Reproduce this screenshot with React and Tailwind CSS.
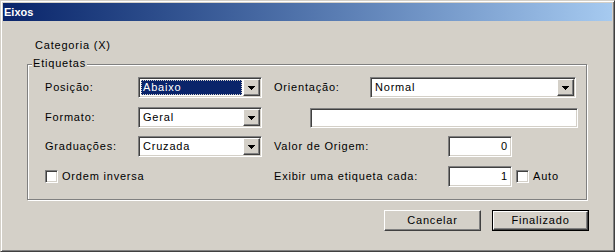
import React from 'react'

const sunken = "border border-t-[#808080] border-l-[#808080] border-b-white border-r-white shadow-[inset_1px_1px_0_#404040,inset_-1px_-1px_0_#d4d0c8]"
const raised = "border border-t-white border-l-white border-b-[#404040] border-r-[#404040] shadow-[inset_-1px_-1px_0_#808080]"

function Arrow() {
  return (
    <svg width="7" height="4" viewBox="0 0 7 4" className="block">
      <path d="M0 0h7L3.5 4z" fill="#000" shapeRendering="crispEdges" />
    </svg>
  )
}

function Combo({ value, width, selected }) {
  return (
    <div className={`flex h-[21px] p-[1px] ${sunken} ${width}`}>
      <div className="flex-1 bg-white p-[1px] flex">
        {selected ? (
          <div className="flex-1 bg-[#0a246a] text-white border border-dotted border-[#d4d0c8] flex items-center pl-[1px] leading-[13px]">
            {value}
          </div>
        ) : (
          <div className="flex-1 flex items-center pl-[2px] leading-[13px]">{value}</div>
        )}
      </div>
      <div className={`w-[17px] bg-[#d4d0c8] flex items-center justify-center ${raised}`}>
        <Arrow />
      </div>
    </div>
  )
}

function Field({ value, width, height = 'h-[21px]' }) {
  return (
    <div className={`${sunken} ${width} ${height} bg-white flex items-center justify-end pr-[3px] leading-[13px]`}>
      {value}
    </div>
  )
}

function Check() {
  return <div className={`w-[13px] h-[13px] bg-white shrink-0 ${sunken}`} />
}

export default function App() {
  return (
    <div className="w-[615px] h-[252px] bg-[#d4d0c8] border border-t-[#d4d0c8] border-l-[#d4d0c8] border-r-[#404040] border-b-[#404040] shadow-[inset_1px_1px_0_#fff,inset_-1px_-1px_0_#808080] p-[2px] flex flex-col text-[11px] tracking-[0.8px] text-black font-[family-name:'Liberation_Sans',Arial,sans-serif]">
      {/* title bar */}
      <div className="h-[18px] shrink-0 bg-linear-to-r from-[#0a246a] to-[#a6caf0] flex items-center">
        <span className="font-bold text-white pl-[1px] tracking-normal leading-[18px]">Eixos</span>
      </div>

      <div className="mt-[18px] ml-[32px] leading-[13px]">Categoria (X)</div>

      {/* Etiquetas group */}
      <div className="mt-[12px] ml-[24px] w-[560px] h-[136px] relative border border-[#808080] shadow-[inset_1px_1px_0_#fff,1px_1px_0_#fff] pt-[12px] pl-[17px]">
        <div className="absolute left-[4px] top-[-8px] px-[1px] bg-[#d4d0c8] leading-[13px]">Etiquetas</div>

        <div className="flex items-center h-[21px]">
          <div className="w-[93px]">Posição:</div>
          <Combo value="Abaixo" width="w-[124px]" selected />
          <div className="ml-[12px] w-[96px]">Orientação:</div>
          <Combo value="Normal" width="w-[206px]" />
        </div>

        <div className="flex items-center h-[21px] mt-[9px]">
          <div className="w-[93px]">Formato:</div>
          <Combo value="Geral" width="w-[124px]" />
          <div className="ml-[48px]">
            <Field value="" width="w-[268px]" height="h-[20px]" />
          </div>
        </div>

        <div className="flex items-center h-[21px] mt-[8px]">
          <div className="w-[93px]">Graduações:</div>
          <Combo value="Cruzada" width="w-[124px]" />
          <div className="ml-[12px] w-[174px]">Valor de Origem:</div>
          <Field value="0" width="w-[64px]" />
        </div>

        <div className="flex items-center h-[21px] mt-[9px]">
          <div className="w-[229px] flex items-center gap-[4px]">
            <Check />
            <span>Ordem inversa</span>
          </div>
          <div className="w-[174px]">Exibir uma etiqueta cada:</div>
          <Field value="1" width="w-[64px]" />
          <div className="ml-[4px]"><Check /></div>
          <span className="ml-[4px]">Auto</span>
        </div>
      </div>

      {/* buttons */}
      <div className="flex mt-[10px] ml-[381px] gap-[11px]">
        <button className={`w-[97px] h-[21px] bg-[#d4d0c8] ${raised} leading-[13px]`}>Cancelar</button>
        <div className="w-[97px] h-[21px] border border-black flex">
          <button className={`flex-1 bg-[#d4d0c8] ${raised} leading-[13px]`}>Finalizado</button>
        </div>
      </div>
    </div>
  )
}
